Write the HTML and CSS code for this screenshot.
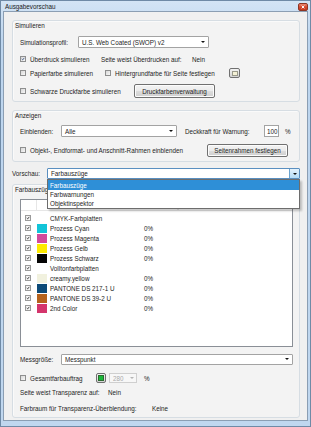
FILE: index.html
```html
<!DOCTYPE html>
<html lang="de">
<head>
  <meta charset="UTF-8" />
  <title>Ausgabevorschau</title>
  <link rel="stylesheet" href="styles.css">
</head>
<body>

<div class="window">
  <div class="titlebar">
    <span>Ausgabevorschau</span>
    <span class="close"><svg viewBox="0 0 10 8"><path d="M3.3 2.2 L6.7 5.8 M6.7 2.2 L3.3 5.8" /></svg></span>
  </div>

  <div class="client">

    <div class="group g1">
      <div class="legend">Simulieren</div>
      <div class="row r1">
        <span class="w58">Simulationsprofil:</span>
        <div class="combo w131">U.S. Web Coated (SWOP) v2<span class="arrow"></span></div>
      </div>
      <div class="row r2">
        <label class="cb w81"><span class="box"><svg viewBox="0 0 6 6"><path d="M1.1 3 L2.5 4.4 L4.9 1.3" /></svg></span>Überdruck simulieren</label>
        <span class="w91">Seite weist Überdrucken auf:</span>
        <span>Nein</span>
      </div>
      <div class="row">
        <label class="cb w85"><span class="box"></span>Papierfarbe simulieren</label>
        <label class="cb w124"><span class="box"></span>Hintergrundfarbe für Seite festlegen</label>
        <span class="colorbtn"><span class="cream"></span></span>
      </div>
      <div class="row r4">
        <label class="cb w114"><span class="box"></span>Schwarze Druckfarbe simulieren</label>
        <span class="btn w81">Druckfarbenverwaltung</span>
      </div>
    </div>

    <div class="group g2">
      <div class="legend">Anzeigen</div>
      <div class="row r5">
        <span class="w41">Einblenden:</span>
        <div class="combo w116">Alle<span class="arrow"></span></div>
        <span class="w79 ml8">Deckkraft für Warnung:</span>
        <span class="field w15">100</span>
        <span class="ml6">%</span>
      </div>
      <div class="row r6">
        <label class="cb w187"><span class="box"></span>Objekt-, Endformat- und Anschnitt-Rahmen einblenden</label>
        <span class="btn w81 h13">Seitenrahmen festlegen</span>
      </div>
    </div>

    <div class="vrow">
      <span class="w35">Vorschau:</span>
      <div class="combo grow open">Farbauszüge<span class="arrow"></span></div>
      <div class="dropdown">
        <div class="sel">Farbauszüge</div>
        <div>Farbwarnungen</div>
        <div>Objektinspektor</div>
      </div>
    </div>

    <div class="group g3">
      <div class="legend">Farbauszüge</div>
      <div class="list">
        <div class="head"><span class="c1"></span><span class="c2"></span><span></span></div>
        <div class="items">
          <div class="item"><span class="box sm on"><svg viewBox="0 0 6 6"><path d="M1.1 3 L2.5 4.4 L4.9 1.3" /></svg></span><span></span><span>CMYK-Farbplatten</span><span></span></div>
          <div class="item"><span class="box sm on"><svg viewBox="0 0 6 6"><path d="M1.1 3 L2.5 4.4 L4.9 1.3" /></svg></span><span class="sw cyan"></span><span>Prozess Cyan</span><span>0%</span></div>
          <div class="item"><span class="box sm on"><svg viewBox="0 0 6 6"><path d="M1.1 3 L2.5 4.4 L4.9 1.3" /></svg></span><span class="sw magenta"></span><span>Prozess Magenta</span><span>0%</span></div>
          <div class="item"><span class="box sm on"><svg viewBox="0 0 6 6"><path d="M1.1 3 L2.5 4.4 L4.9 1.3" /></svg></span><span class="sw yellow"></span><span>Prozess Gelb</span><span>0%</span></div>
          <div class="item"><span class="box sm on"><svg viewBox="0 0 6 6"><path d="M1.1 3 L2.5 4.4 L4.9 1.3" /></svg></span><span class="sw black"></span><span>Prozess Schwarz</span><span>0%</span></div>
          <div class="item"><span class="box sm on"><svg viewBox="0 0 6 6"><path d="M1.1 3 L2.5 4.4 L4.9 1.3" /></svg></span><span></span><span>Volltonfarbplatten</span><span></span></div>
          <div class="item"><span class="box sm on"><svg viewBox="0 0 6 6"><path d="M1.1 3 L2.5 4.4 L4.9 1.3" /></svg></span><span class="sw creamy"></span><span>creamy.yellow</span><span>0%</span></div>
          <div class="item"><span class="box sm on"><svg viewBox="0 0 6 6"><path d="M1.1 3 L2.5 4.4 L4.9 1.3" /></svg></span><span class="sw p217"></span><span>PANTONE DS 217-1 U</span><span>0%</span></div>
          <div class="item"><span class="box sm on"><svg viewBox="0 0 6 6"><path d="M1.1 3 L2.5 4.4 L4.9 1.3" /></svg></span><span class="sw p39"></span><span>PANTONE DS 39-2 U</span><span>0%</span></div>
          <div class="item"><span class="box sm on"><svg viewBox="0 0 6 6"><path d="M1.1 3 L2.5 4.4 L4.9 1.3" /></svg></span><span class="sw second"></span><span>2nd Color</span><span>0%</span></div>
        </div>
      </div>
      <div class="row r7">
        <span class="w41">Messgröße:</span>
        <div class="combo grow h11">Messpunkt<span class="arrow"></span></div>
      </div>
      <div class="row r8">
        <label class="cb w76"><span class="box"></span>Gesamtfarbauftrag</label>
        <span class="colorbtn sq"><span class="green"></span></span>
        <span class="spin">280<span class="arrow"></span></span>
        <span class="ml7">%</span>
      </div>
      <div class="row r9">
        <span class="w88">Seite weist Transparenz auf:</span>
        <span>Nein</span>
      </div>
      <div class="row r10">
        <span class="w132">Farbraum für Transparenz-Überblendung:</span>
        <span>Keine</span>
      </div>
    </div>

  </div>
</div>

</body>
</html>
```

FILE: styles.css
```css
* { box-sizing: border-box; }
body { margin: 0; font-family: "Liberation Sans", Arial, sans-serif; font-size: 6.3px; color: #1d1d1d; white-space: nowrap; }

.window { width: 311px; height: 427px; display: flex; flex-direction: column; padding: 0 2px 5px 2px; border: 1px solid #6f8aa6; background: linear-gradient(#d3e4f5, #bdd5ee 40px, #c0d7ef); }
.titlebar { height: 10px; display: flex; align-items: center; justify-content: space-between; padding-left: 2px; color: #1a1a1a; }
.close { width: 10px; height: 8px; margin-top: 2px; border: 1px solid #8d3524; border-radius: 2px; background: linear-gradient(#eb8a73, #d6472c 50%, #c23a20); display: flex; }
.close svg { width: 100%; height: 100%; }
.close path { stroke: #fff; stroke-width: 1.3; fill: none; }

.client { flex: 1; background: #f0f0f0; border: 1px solid #8b9eb3; padding: 0 7px 0 8px; }

.group { border: 1px solid #d6dde3; border-radius: 3px; padding: 0 6px 0 7px; background: #f3f3f3; box-shadow: inset 1px 1px 0 #fafafa; }
.legend { height: 9px; display: flex; align-items: center; padding-left: 2px; margin-left: -7px; padding-left: 2px; }
.g1 { margin-top: 8px; padding-bottom: 3px; }
.g2 { margin-top: 8px; padding-bottom: 4px; }
.g3 { margin-top: 5px; padding-bottom: 4px; }

.row { display: flex; align-items: center; height: 14px; }
.row > * { flex-shrink: 0; }
.r1 { margin-top: 5px; }
.r2 { margin-top: 3px; }
.r4 { margin-top: 4px; }
.r5 { margin-top: 4px; }
.r6 { margin-top: 5px; }
.r7 { margin-top: 6px; height: 12px; }
.r8 { margin-top: 7px; height: 12px; }
.r9 { margin-top: 3px; height: 10px; }
.r10 { margin-top: 6px; height: 10px; }

.w15 { width: 15px; }
.w35 { width: 35px; }
.w41 { width: 41px; }
.w58 { width: 58px; }
.w76 { width: 76px; }
.w79 { width: 79px; }
.w81 { width: 81px; }
.w85 { width: 85px; }
.w88 { width: 88px; }
.w91 { width: 91px; }
.w114 { width: 114px; }
.w116 { width: 116px; }
.w124 { width: 124px; }
.w131 { width: 131px; }
.w132 { width: 132px; }
.w187 { width: 187px; }
.ml6 { margin-left: 6px; }
.ml7 { margin-left: 7px; }
.ml8 { margin-left: 8px; }
.grow { flex: 1; }

.combo { height: 12px; border: 1px solid #a3a3a3; border-radius: 1px; background: #fff; display: flex; align-items: center; padding-left: 3px; }
.combo.h11 { height: 11px; }
.arrow { margin-left: auto; width: 10px; height: 100%; display: flex; align-items: center; justify-content: center; }
.arrow::after { content: ""; border-left: 2px solid transparent; border-right: 2px solid transparent; border-top: 2.5px solid #111; }
.combo.open { border-color: #5a8fc0; }
.combo.open .arrow { background: linear-gradient(#e4f2fc, #b4dcf6); border-left: 1px solid #6aa3cf; }

.field { height: 12px; border: 1px solid #a3a3a3; background: #fff; display: flex; align-items: center; padding-left: 2px; }

.btn { height: 14px; border: 1px solid #707070; border-radius: 2px; background: linear-gradient(#f3f3f3, #ebebeb 50%, #dddddd 50%, #cfcfcf); box-shadow: inset 0 0 0 1px #fcfcfc; display: flex; align-items: center; justify-content: center; }
.btn.h13 { height: 13px; }

.cb { display: flex; align-items: center; gap: 4px; }
.box { width: 6px; height: 6px; border: 1px solid #8e8f8f; background: linear-gradient(135deg, #d8d8d8, #f7f7f7); display: flex; flex-shrink: 0; }
.box svg { width: 100%; height: 100%; overflow: visible; }
.box path { stroke: #1c3a70; stroke-width: 1.1; fill: none; }
.box.sm { width: 6px; height: 6px; margin-left: 4px; background: #f4f4f4; border-color: #9a9a9a; }
.box.sm path { stroke: #111; }

.colorbtn { width: 11px; height: 10px; border: 1px solid #707070; border-radius: 2px; background: linear-gradient(#f3f3f3, #d3d3d3); display: flex; align-items: center; justify-content: center; }
.colorbtn.sq { width: 10px; }
.cream { width: 6px; height: 5px; background: #f4f1d6; border: 1px solid #9a9a8a; }
.green { width: 6px; height: 6px; background: #1ab83a; border: 1px solid #2c6b30; }

.spin { width: 28px; height: 10px; margin-left: 3px; border: 1px solid #cfcfcf; background: #f7f7f7; color: #a9a9a9; display: flex; align-items: center; padding-left: 3px; }
.spin .arrow { width: 8px; }
.spin .arrow::after { border-top-color: #b5b5b5; }

.vrow { position: relative; display: flex; align-items: center; height: 11px; margin-top: 6px; }
.vrow .combo { height: 11px; }
.dropdown { position: absolute; left: 35px; right: 0; top: 11px; background: #fff; border: 1px solid #6d6d6d; box-shadow: 2px 2px 2px rgba(0, 0, 0, 0.22); z-index: 5; }
.dropdown div { height: 9px; padding-left: 2px; display: flex; align-items: center; }
.dropdown .sel { height: 10px; background: #2e8fd7; color: #fff; }

.list { margin-top: 5px; height: 148px; border: 1px solid #8a8f96; background: #fff; }
.head { height: 11px; display: flex; border-bottom: 1px solid #e6e6e6; }
.head span { border-right: 1px solid #e6e6e6; }
.head .c1 { width: 16px; }
.head .c2 { width: 141px; }
.items { padding-top: 2px; }
.item { display: grid; grid-template-columns: 16px 13px 94px auto; height: 10px; align-items: center; }
.sw { width: 10px; height: 9px; }
.cyan { background: #12c4d8; }
.magenta { background: #d24b9c; }
.yellow { background: #fdea00; }
.black { background: #050505; }
.creamy { background: #f1f1de; }
.p217 { background: #0c4a78; }
.p39 { background: #b5621c; }
.second { background: #d4356c; }
```
